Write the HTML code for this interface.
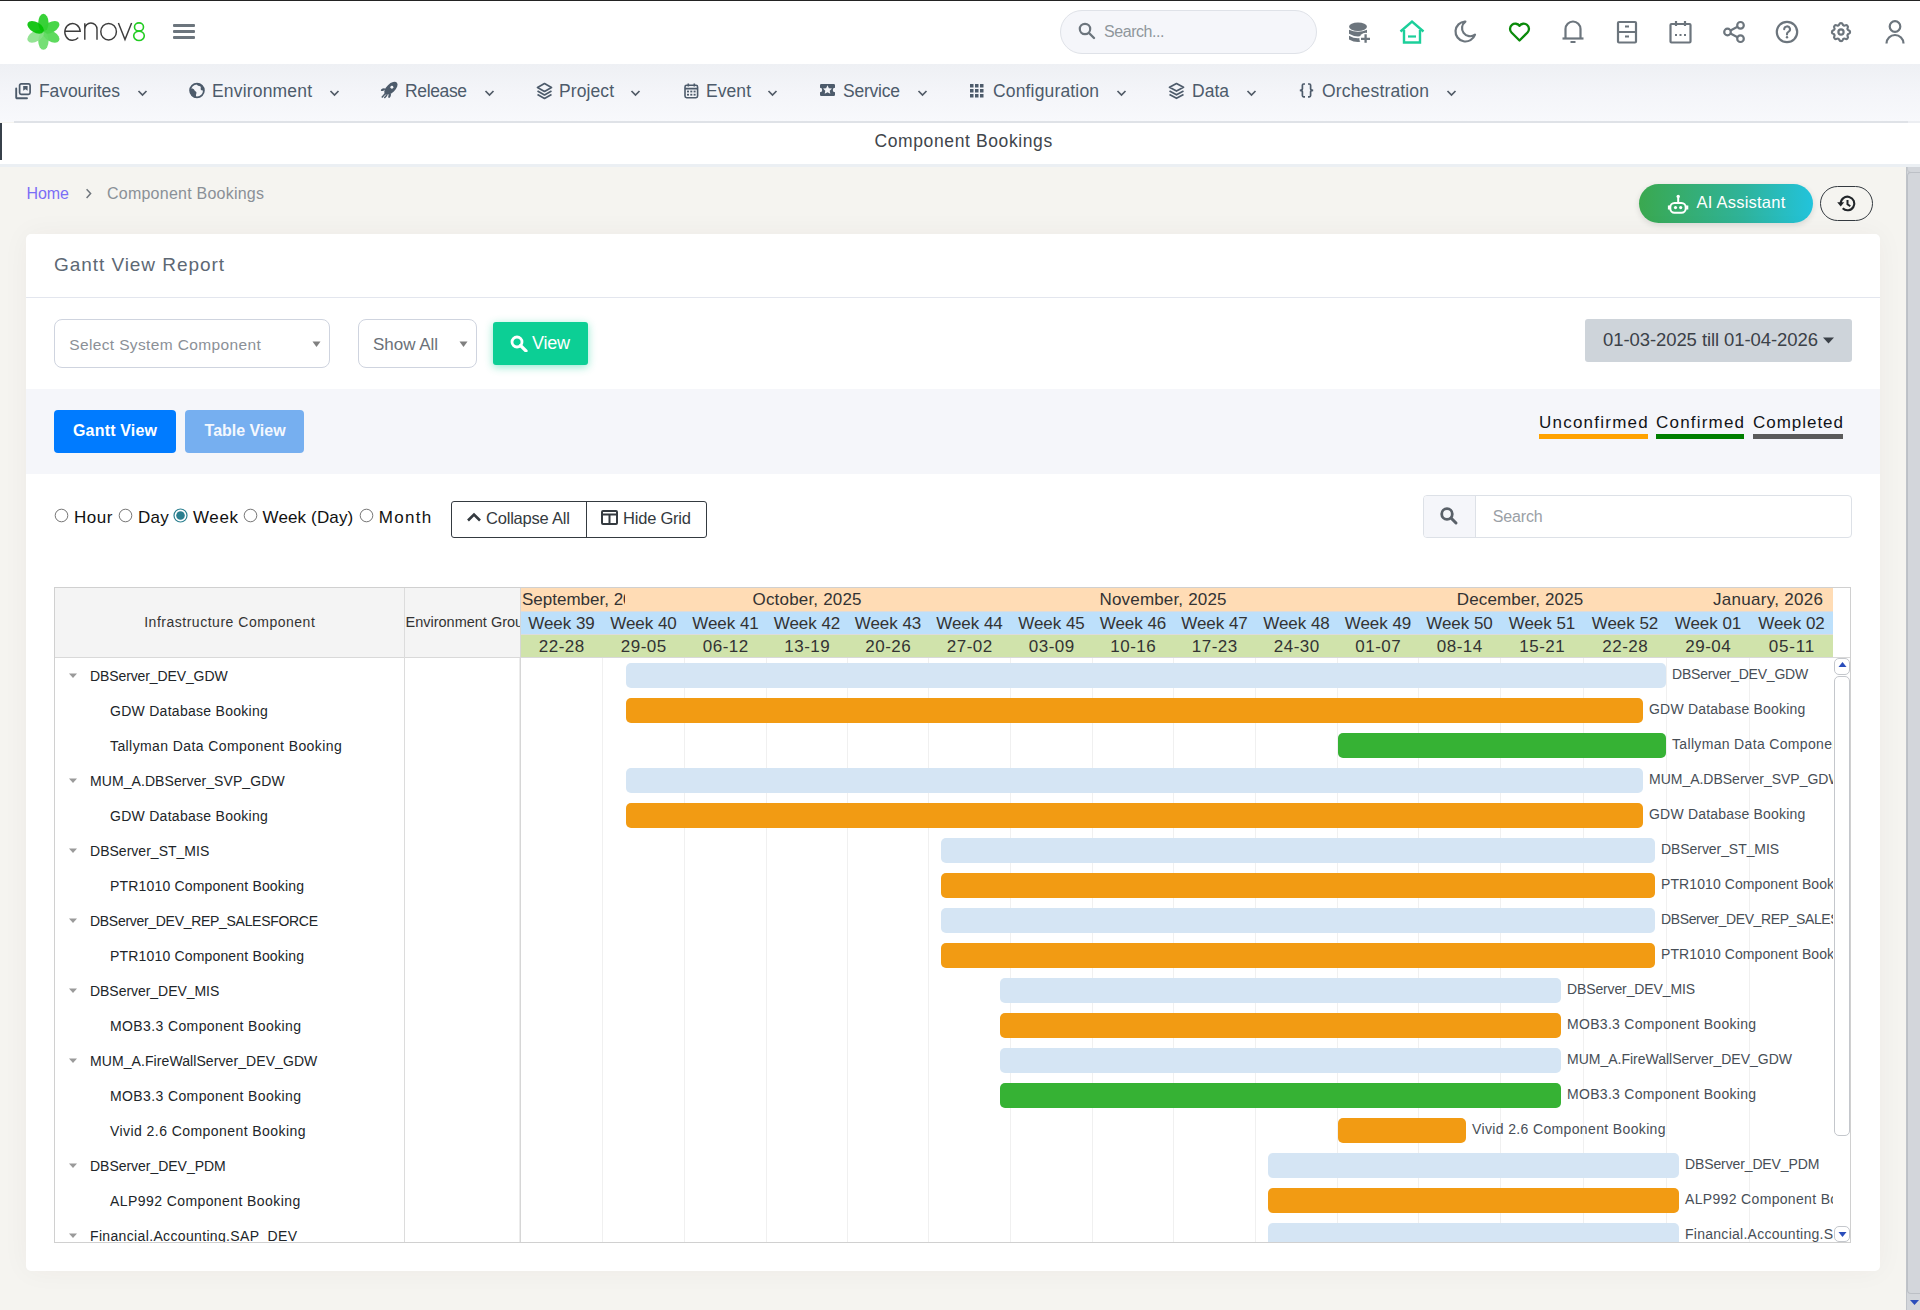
<!DOCTYPE html><html><head><meta charset="utf-8"><style>
html,body{margin:0;padding:0;}
body{width:1920px;height:1310px;position:relative;overflow:hidden;background:#f5f4f0;font-family:"Liberation Sans",sans-serif;}
.a{position:absolute;box-sizing:border-box;}
.t{position:absolute;white-space:nowrap;line-height:1;}
</style></head><body>

<div class="a" style="left:0px;top:0px;width:1920px;height:64px;background:#fff;"></div>
<div class="a" style="left:0px;top:0px;width:1920px;height:1px;background:#232323;"></div>
<svg class="a" style="left:0px;top:0px;" width="64" height="64" viewBox="0 0 64 64"><ellipse cx="43.4" cy="22.8" rx="5.2" ry="9.0" fill="#22cc22" opacity="0.9" transform="rotate(0 43.4 31.8)"/><ellipse cx="43.4" cy="22.8" rx="5.2" ry="9.0" fill="#33d233" opacity="0.9" transform="rotate(60 43.4 31.8)"/><ellipse cx="43.4" cy="22.8" rx="5.2" ry="9.0" fill="#4dd64d" opacity="0.9" transform="rotate(120 43.4 31.8)"/><ellipse cx="43.4" cy="22.8" rx="5.2" ry="9.0" fill="#66dc66" opacity="0.9" transform="rotate(180 43.4 31.8)"/><ellipse cx="43.4" cy="22.8" rx="5.2" ry="9.0" fill="#88e088" opacity="0.9" transform="rotate(240 43.4 31.8)"/><ellipse cx="43.4" cy="22.8" rx="5.2" ry="9.0" fill="#00c000" opacity="0.9" transform="rotate(300 43.4 31.8)"/></svg>
<svg class="a" style="left:60px;top:18px;" width="90" height="28" viewBox="0 0 90 28"><g fill="none" stroke="#3d3d3d" stroke-width="1.45" transform="translate(-60 -18)">
<path d="M64.7 31.2H80.2A7.7 8.4 0 1 0 78.2 37.6"/>
<path d="M84.8 23.2V39.8M84.8 29.3A6.1 6.3 0 0 1 97 29.3V39.8"/>
<ellipse cx="108.6" cy="31.7" rx="7.8" ry="8.3"/>
<path d="M118.4 23L125 39.6L131.6 23"/>
</g>
<g fill="none" stroke="#22cc22" stroke-width="1.6" transform="translate(-60 -18)">
<ellipse cx="139" cy="27" rx="4.5" ry="4.1"/><ellipse cx="139" cy="35.8" rx="5.3" ry="4.7"/>
</g></svg>
<div class="a" style="left:173px;top:24px;width:22px;height:3px;background:#6c757d;border-radius:1px;"></div>
<div class="a" style="left:173px;top:30px;width:22px;height:3px;background:#6c757d;border-radius:1px;"></div>
<div class="a" style="left:173px;top:36px;width:22px;height:3px;background:#6c757d;border-radius:1px;"></div>
<div class="a" style="left:1060px;top:10px;width:257px;height:44px;background:#f5f6fa;border:1px solid #dfe2e8;border-radius:22px;"></div>
<svg class="a" style="left:1078px;top:22px;" width="18" height="18" viewBox="0 0 18 18"><circle cx="7" cy="7" r="5.2" fill="none" stroke="#6c757d" stroke-width="2.2"/><line x1="11" y1="11" x2="16" y2="16" stroke="#6c757d" stroke-width="2.4" stroke-linecap="round"/></svg>
<div class="t" style="left:1104.00px;top:24.00px;font-size:16px;color:#8f969c;letter-spacing:-0.441px;">Search...</div>
<svg class="a" style="left:1346px;top:20px;" width="26" height="26" viewBox="0 0 26 26"><defs><mask id="dbm"><rect x="0" y="0" width="26" height="26" fill="#fff"/><circle cx="19.7" cy="19" r="6.3" fill="#000"/></mask></defs><g fill="#6c757d" mask="url(#dbm)"><ellipse cx="12" cy="6.75" rx="9" ry="4.2"/><path d="M3 9.8Q12 13.8 21 9.8V13.8Q12 19.2 3 13.8Z"/><path d="M3 15.8Q12 20.8 21 15.8V19.4Q12 24.4 3 19.4Z"/></g><path d="M19.6 14.3v8.5M15 18.9h9" stroke="#6c757d" stroke-width="2.3"/></svg>
<svg class="a" style="left:1398px;top:19px;" width="28" height="28" viewBox="0 0 28 28"><path d="M2.5 12.5L14 2.5l11.5 10" fill="none" stroke="#1ccf9a" stroke-width="2.4"/><path d="M6 11v12.5h16V11" fill="none" stroke="#1ccf9a" stroke-width="2.4"/><path d="M10 17.5h8" stroke="#1ccf9a" stroke-width="2.2"/></svg>
<svg class="a" style="left:1453px;top:19px;" width="26" height="26" viewBox="0 0 26 26"><path d="M12 2.5c.13 0 .26 0 .39 0a7.5 7.5 0 0 0 9.6 13.2a10 10 0 1 1 -10 -13.2z" fill="none" stroke="#6c757d" stroke-width="2.2" stroke-linejoin="round"/></svg>
<svg class="a" style="left:1505.5px;top:19.5px;" width="27" height="26" viewBox="0 0 27 26"><path d="M21.5 12.5l-8 8l-8 -8a5.2 5.2 0 1 1 8 -6.6a5.2 5.2 0 1 1 8 6.6z" fill="none" stroke="#0a8a0a" stroke-width="2.3" stroke-linejoin="round"/></svg>
<svg class="a" style="left:1560px;top:18px;" width="26" height="26" viewBox="0 0 26 26"><path d="M5.5 20.5V11a7.5 7.5 0 0 1 15 0v9.5" fill="none" stroke="#6c757d" stroke-width="2.2"/><path d="M2.5 20.5h21" stroke="#6c757d" stroke-width="2.2"/><path d="M10.5 24h5" stroke="#6c757d" stroke-width="2"/></svg>
<svg class="a" style="left:1614px;top:19px;" width="26" height="26" viewBox="0 0 26 26"><rect x="4" y="3" width="18" height="20.5" rx="1" fill="none" stroke="#6c757d" stroke-width="2.2"/><path d="M4 13h18M11 7.5h4M11 17.5h4" stroke="#6c757d" stroke-width="2"/></svg>
<svg class="a" style="left:1667px;top:19px;" width="26" height="26" viewBox="0 0 26 26"><rect x="3.5" y="5" width="20" height="18.5" rx="1" fill="none" stroke="#6c757d" stroke-width="2.2"/><path d="M9 2v5M18 2v5" stroke="#6c757d" stroke-width="2.2"/><path d="M8 16h2M12.5 16h2M17 16h2" stroke="#6c757d" stroke-width="2"/></svg>
<svg class="a" style="left:1721px;top:19px;" width="26" height="26" viewBox="0 0 26 26"><g fill="none" stroke="#6c757d" stroke-width="2.2"><circle cx="6.5" cy="13" r="3.3"/><circle cx="19.5" cy="6.3" r="3.3"/><circle cx="19.5" cy="19.7" r="3.3"/><path d="M9.5 11.4l7-3.6M9.5 14.6l7 3.6"/></g></svg>
<svg class="a" style="left:1774px;top:19px;" width="26" height="26" viewBox="0 0 26 26"><circle cx="13" cy="13" r="10.2" fill="none" stroke="#6c757d" stroke-width="2.2"/><path d="M10.2 10.3a2.9 2.9 0 1 1 4.2 2.6c-.9.5-1.4 1.1-1.4 2.1v.5" fill="none" stroke="#6c757d" stroke-width="2.1" stroke-linecap="round"/><circle cx="13" cy="18.3" r="1.2" fill="#6c757d"/></svg>
<svg class="a" style="left:1828px;top:19px;" width="26" height="26" viewBox="0 0 26 26"><g transform="translate(1 1)"><path d="M10.3 4.3c.4-1.7 2.9-1.7 3.4 0a1.7 1.7 0 0 0 2.6 1.1c1.5-.9 3.3.8 2.4 2.4a1.7 1.7 0 0 0 1.1 2.6c1.7.4 1.7 2.9 0 3.4a1.7 1.7 0 0 0-1.1 2.6c.9 1.5-.8 3.3-2.4 2.4a1.7 1.7 0 0 0-2.6 1.1c-.4 1.7-2.9 1.7-3.4 0a1.7 1.7 0 0 0-2.6-1.1c-1.5.9-3.3-.8-2.4-2.4a1.7 1.7 0 0 0-1.1-2.6c-1.7-.4-1.7-2.9 0-3.4a1.7 1.7 0 0 0 1.1-2.6c-.9-1.5.8-3.3 2.4-2.4c1 .6 2.3.1 2.6-1.1z" fill="none" stroke="#6c757d" stroke-width="2.2"/><circle cx="12" cy="12" r="2.6" fill="none" stroke="#6c757d" stroke-width="2.2"/></g></svg>
<svg class="a" style="left:1882px;top:19px;" width="26" height="26" viewBox="0 0 26 26"><circle cx="13" cy="7.5" r="5.3" fill="none" stroke="#6c757d" stroke-width="2.2"/><path d="M4.5 24.5a8.5 8.5 0 0 1 17 0" fill="none" stroke="#6c757d" stroke-width="2.2"/></svg>
<div class="a" style="left:0px;top:64px;width:1920px;height:58px;background:linear-gradient(180deg,#eef0f4 0%,#f4f5f9 50%,#f8f9fc 100%);"></div>
<div class="a" style="left:14px;top:121px;width:1894px;height:2px;background:#dfe2e7;"></div>
<div class="a" style="left:1908px;top:121px;width:12px;height:2px;background:#eceef2;"></div>
<div class="t" style="left:39.00px;top:83.00px;font-size:17.5px;color:#4d5b6b;letter-spacing:-0.078px;">Favourites</div>
<svg class="a" style="left:137px;top:89px;" width="11" height="8" viewBox="0 0 11 8"><path d="M1.5 2l4 4 4-4" fill="none" stroke="#505a66" stroke-width="1.7"/></svg>
<div class="t" style="left:212.00px;top:83.00px;font-size:17.5px;color:#4d5b6b;letter-spacing:0.176px;">Environment</div>
<svg class="a" style="left:329px;top:89px;" width="11" height="8" viewBox="0 0 11 8"><path d="M1.5 2l4 4 4-4" fill="none" stroke="#505a66" stroke-width="1.7"/></svg>
<div class="t" style="left:405.00px;top:83.00px;font-size:17.5px;color:#4d5b6b;letter-spacing:-0.368px;">Release</div>
<svg class="a" style="left:484px;top:89px;" width="11" height="8" viewBox="0 0 11 8"><path d="M1.5 2l4 4 4-4" fill="none" stroke="#505a66" stroke-width="1.7"/></svg>
<div class="t" style="left:559.00px;top:83.00px;font-size:17.5px;color:#4d5b6b;letter-spacing:0.089px;">Project</div>
<svg class="a" style="left:630px;top:89px;" width="11" height="8" viewBox="0 0 11 8"><path d="M1.5 2l4 4 4-4" fill="none" stroke="#505a66" stroke-width="1.7"/></svg>
<div class="t" style="left:706.00px;top:83.00px;font-size:17.5px;color:#4d5b6b;letter-spacing:0.063px;">Event</div>
<svg class="a" style="left:767px;top:89px;" width="11" height="8" viewBox="0 0 11 8"><path d="M1.5 2l4 4 4-4" fill="none" stroke="#505a66" stroke-width="1.7"/></svg>
<div class="t" style="left:843.00px;top:83.00px;font-size:17.5px;color:#4d5b6b;letter-spacing:-0.226px;">Service</div>
<svg class="a" style="left:917px;top:89px;" width="11" height="8" viewBox="0 0 11 8"><path d="M1.5 2l4 4 4-4" fill="none" stroke="#505a66" stroke-width="1.7"/></svg>
<div class="t" style="left:993.00px;top:83.00px;font-size:17.5px;color:#4d5b6b;letter-spacing:0.159px;">Configuration</div>
<svg class="a" style="left:1116px;top:89px;" width="11" height="8" viewBox="0 0 11 8"><path d="M1.5 2l4 4 4-4" fill="none" stroke="#505a66" stroke-width="1.7"/></svg>
<div class="t" style="left:1192.00px;top:83.00px;font-size:17.5px;color:#4d5b6b;letter-spacing:0.012px;">Data</div>
<svg class="a" style="left:1246px;top:89px;" width="11" height="8" viewBox="0 0 11 8"><path d="M1.5 2l4 4 4-4" fill="none" stroke="#505a66" stroke-width="1.7"/></svg>
<div class="t" style="left:1322.00px;top:83.00px;font-size:17.5px;color:#4d5b6b;letter-spacing:0.163px;">Orchestration</div>
<svg class="a" style="left:1446px;top:89px;" width="11" height="8" viewBox="0 0 11 8"><path d="M1.5 2l4 4 4-4" fill="none" stroke="#505a66" stroke-width="1.7"/></svg>
<svg class="a" style="left:14px;top:82px;" width="18" height="18" viewBox="0 0 18 18"><rect x="5.6" y="1.8" width="10.5" height="10.5" rx="1.6" fill="none" stroke="#4d5b6b" stroke-width="1.7"/><path d="M9.2 3.9h4.4v4.9l-2.2-1.5-2.2 1.5z" fill="#4d5b6b"/><path d="M2.2 6.5v8.9a.8.8 0 0 0 .8.8h10" fill="none" stroke="#4d5b6b" stroke-width="1.9" stroke-linecap="round"/></svg>
<svg class="a" style="left:188px;top:82px;" width="18" height="18" viewBox="0 0 18 18"><circle cx="9" cy="8.5" r="6.9" fill="none" stroke="#4d5b6b" stroke-width="1.8"/><path d="M3 6.5c1.5-.3 2.8.2 3.3 1.4.6 1.3 1.8 1.2 2.1 2.4.3 1.2-.6 2.2-.4 3.5.1.8.3 1.5.4 2.2C4.9 15.5 2.4 12.6 2.2 9.3z" fill="#4d5b6b"/><path d="M8.5 1.8c.3 1.2 1.3 2 2.6 2.2 1.5.2 2 1.2 1.6 2.4-.3 1 .5 1.9 1.6 2.1.7.1 1.2-.2 1.6-.6-.1-3-2.3-5.6-5.3-6.2z" fill="#4d5b6b"/></svg>
<svg class="a" style="left:370px;top:78px;" width="40" height="26" viewBox="0 0 40 26"><ellipse cx="20.9" cy="10.3" rx="8.2" ry="4.3" fill="#4d5b6b" transform="rotate(-43 20.9 10.3)"/><circle cx="21.9" cy="9.2" r="1.45" fill="#f5f6f9"/><ellipse cx="13" cy="11.6" rx="2.3" ry="1.15" fill="#4d5b6b" transform="rotate(-22 13 11.6)"/><ellipse cx="19.6" cy="17.8" rx="2.3" ry="1.15" fill="#4d5b6b" transform="rotate(-68 19.6 17.8)"/><path d="M11.8 19.6L15.6 15.3M14.3 19.9L17 16.9" stroke="#4d5b6b" stroke-width="1.5"/></svg>
<svg class="a" style="left:536px;top:82px;" width="17" height="18" viewBox="0 0 17 18"><g fill="none" stroke="#4d5b6b" stroke-width="1.7" stroke-linejoin="round"><path d="M8.5 1.5l7 4-7 4-7-4z"/><path d="M1.5 9l7 4 7-4"/><path d="M1.5 12.5l7 4 7-4"/></g></svg>
<svg class="a" style="left:683.5px;top:82.5px;" width="15" height="16" viewBox="0 0 15 16"><rect x="1" y="2.3" width="12.6" height="12.4" rx="1.6" fill="none" stroke="#4d5b6b" stroke-width="1.6"/><path d="M1 5.6h12.6M4.3 0.6v3M10.3 0.6v3" stroke="#4d5b6b" stroke-width="1.6"/><g fill="#4d5b6b"><rect x="3" y="7.6" width="2" height="1.8"/><rect x="6.3" y="7.6" width="2" height="1.8"/><rect x="9.6" y="7.6" width="2" height="1.8"/><rect x="3" y="10.8" width="2" height="1.8"/><rect x="6.3" y="10.8" width="2" height="1.8"/><rect x="9.6" y="10.8" width="2" height="1.8"/></g></svg>
<svg class="a" style="left:820px;top:84px;" width="15" height="12" viewBox="0 0 15 12"><path d="M1.2 0h12.6a1.2 1.2 0 0 1 1.2 1.2v2.6a2.2 2.2 0 0 0 0 4.4v2.6a1.2 1.2 0 0 1-1.2 1.2H1.2A1.2 1.2 0 0 1 0 10.8V8.2a2.2 2.2 0 0 0 0-4.4V1.2A1.2 1.2 0 0 1 1.2 0z" fill="#4d5b6b"/><path d="M7.5 2.4l1.05 2.2 2.4.3-1.75 1.6.45 2.4-2.15-1.2-2.15 1.2.45-2.4-1.75-1.6 2.4-.3z" fill="#f5f6f9" transform="translate(7.5 6) scale(1.3) translate(-7.5 -6)"/></svg>
<svg class="a" style="left:970px;top:84px;" width="14" height="14" viewBox="0 0 14 14"><g fill="#4d5b6b"><rect x="0" y="0" width="3.5" height="3.5"/><rect x="5" y="0" width="3.5" height="3.5"/><rect x="10" y="0" width="3.5" height="3.5"/><rect x="0" y="5" width="3.5" height="3.5"/><rect x="5" y="5" width="3.5" height="3.5"/><rect x="10" y="5" width="3.5" height="3.5"/><rect x="0" y="10" width="3.5" height="3.5"/><rect x="5" y="10" width="3.5" height="3.5"/><rect x="10" y="10" width="3.5" height="3.5"/></g></svg>
<svg class="a" style="left:1168px;top:82px;" width="17" height="18" viewBox="0 0 17 18"><g fill="none" stroke="#4d5b6b" stroke-width="1.7" stroke-linejoin="round"><path d="M8.5 1.5l7 3.8-7 3.8-7-3.8z"/><path d="M1.5 9l7 3.8 7-3.8"/><path d="M1.5 12.5l7 3.8 7-3.8"/></g></svg>
<svg class="a" style="left:1290px;top:78px;" width="30" height="26" viewBox="0 0 30 26"><g fill="none" stroke="#4d5b6b" stroke-width="1.7"><path d="M15 6H13.6Q12.4 6 12.4 7.3V10.8Q12.4 12.3 9.8 12.3Q12.4 12.3 12.4 13.8V17.5Q12.4 18.8 13.6 18.8H15"/><path d="M18 6H19.4Q20.6 6 20.6 7.3V10.8Q20.6 12.3 23.2 12.3Q20.6 12.3 20.6 13.8V17.5Q20.6 18.8 19.4 18.8H18"/></g></svg>
<div class="a" style="left:0px;top:123px;width:1920px;height:41px;background:#fff;"></div>
<div class="a" style="left:0px;top:123px;width:2px;height:37px;background:#37404a;"></div>
<div class="a" style="left:0px;top:164px;width:1920px;height:3px;background:#ebeff3;"></div>
<div class="t" style="left:874.50px;top:133.00px;font-size:17.5px;color:#40454b;letter-spacing:0.610px;">Component Bookings</div>
<div class="a" style="left:1906px;top:167px;width:14px;height:1143px;background:#d3d6db;border-left:1px solid #bfc3c9;"></div>
<div class="a" style="left:1907px;top:167px;width:13px;height:6px;background:#d3d6db;border-bottom:1px solid #bcc0c6;border-left:1px solid #c4c8cd;border-radius:0 0 0 4px;"></div>
<div class="a" style="left:1907px;top:172px;width:13px;height:1122px;background:#d3d6db;border:1px solid #bcc0c6;border-right:none;border-radius:4px 0 0 4px;"></div>
<svg class="a" style="left:1908px;top:1296px;" width="12" height="10" viewBox="0 0 12 10"><path d="M2 4h9l-4.5 5z" fill="#2a4dbb"/></svg>
<div class="t" style="left:26.50px;top:186.00px;font-size:16px;color:#7b6ef6;letter-spacing:-0.060px;">Home</div>
<svg class="a" style="left:84px;top:186px;" width="10" height="14" viewBox="0 0 10 14"><path d="M2.6 3.3l4 4.3-4 4.3" fill="none" stroke="#6f757c" stroke-width="1.5"/></svg>
<div class="t" style="left:107.00px;top:186.00px;font-size:16px;color:#8a9097;letter-spacing:0.236px;">Component Bookings</div>
<div class="a" style="left:1639px;top:184px;width:174px;height:39px;background:linear-gradient(90deg,#3aa84f 0%,#2fb39a 60%,#22c3dc 100%);border-radius:20px;box-shadow:0 2px 6px rgba(0,0,0,0.12);"></div>
<svg class="a" style="left:1666px;top:193px;" width="24" height="22" viewBox="0 0 24 22"><g fill="none" stroke="#fff" stroke-width="2"><rect x="4.3" y="10" width="15.4" height="9.8" rx="4.2"/><path d="M12.2 4.5V10"/><path d="M3 12.5v4M21.2 12.5v4" stroke-width="2.2"/></g><circle cx="12.2" cy="3.5" r="1.7" fill="#fff"/><circle cx="9.5" cy="14.6" r="1.6" fill="#fff"/><circle cx="14.7" cy="14.6" r="1.6" fill="#fff"/></svg>
<div class="t" style="left:1696.40px;top:194.00px;font-size:16.5px;color:#ffffff;letter-spacing:0.245px;">AI Assistant</div>
<div class="a" style="left:1820px;top:186px;width:53px;height:35px;border:1px solid #343a40;border-radius:18px;background:transparent;"></div>
<svg class="a" style="left:1836px;top:194px;" width="22" height="20" viewBox="0 0 22 20"><path d="M4.7 9.5A6.8 6.8 0 1 1 6.7 14.3" fill="none" stroke="#212529" stroke-width="2.1"/><path d="M1.2 8.3h7l-3.5 4.2z" fill="#212529"/><path d="M11.5 6v4.3l2.8 2" fill="none" stroke="#212529" stroke-width="2"/></svg>
<div class="a" style="left:26px;top:234px;width:1854px;height:1037px;background:#fff;border-radius:5px;box-shadow:0 0 28px rgba(60,50,30,0.045);"></div>
<div class="t" style="left:54.00px;top:255.00px;font-size:19px;color:#5d6874;letter-spacing:0.944px;">Gantt View Report</div>
<div class="a" style="left:26px;top:297px;width:1854px;height:1px;background:#e3e6ee;"></div>
<div class="a" style="left:54px;top:319px;width:276px;height:49px;border:1px solid #cfd4df;border-radius:8px;background:#fff;"></div>
<div class="t" style="left:69.20px;top:337.00px;font-size:15.5px;color:#8b9097;letter-spacing:0.368px;">Select System Component</div>
<svg class="a" style="left:312px;top:341px;" width="10" height="7" viewBox="0 0 10 7"><path d="M0.5 0.5h8l-4 5.5z" fill="#808080"/></svg>
<div class="a" style="left:358px;top:319px;width:119px;height:49px;border:1px solid #cfd4df;border-radius:8px;background:#fff;"></div>
<div class="t" style="left:373.00px;top:336.00px;font-size:17px;color:#6b7178;letter-spacing:-0.029px;">Show All</div>
<svg class="a" style="left:459px;top:341px;" width="10" height="7" viewBox="0 0 10 7"><path d="M0.5 0.5h8l-4 5.5z" fill="#808080"/></svg>
<div class="a" style="left:493px;top:322px;width:95px;height:43px;background:#0ccf95;border-radius:3px;box-shadow:0 2px 8px rgba(12,207,149,0.45);"></div>
<svg class="a" style="left:510px;top:335px;" width="19" height="17" viewBox="0 0 19 17"><circle cx="7" cy="7" r="5" fill="none" stroke="#fff" stroke-width="2.8"/><path d="M10.5 10.5l5.5 5.5" stroke="#fff" stroke-width="3.2" stroke-linecap="round"/></svg>
<div class="t" style="left:532.00px;top:334.00px;font-size:18px;color:#ffffff;letter-spacing:-0.230px;">View</div>
<div class="a" style="left:1585px;top:319px;width:267px;height:43px;background:#ced4da;border-radius:3px;"></div>
<div class="t" style="left:1603.00px;top:331.00px;font-size:18.5px;color:#3b4148;letter-spacing:-0.081px;">01-03-2025 till 01-04-2026</div>
<svg class="a" style="left:1822px;top:336px;" width="14" height="8" viewBox="0 0 14 8"><path d="M1 1.5h11l-5.5 6z" fill="#3b4148"/></svg>
<div class="a" style="left:26px;top:389px;width:1854px;height:85px;background:#f5f6fa;"></div>
<div class="a" style="left:54px;top:410px;width:122px;height:43px;background:#007bff;border-radius:4px;"></div>
<div class="t" style="left:73.00px;top:423.00px;font-size:16px;color:#fff;font-weight:bold;letter-spacing:0.179px;">Gantt View</div>
<div class="a" style="left:185px;top:410px;width:119px;height:43px;background:#76aff0;border-radius:4px;"></div>
<div class="t" style="left:204.60px;top:423.00px;font-size:16px;color:#f4f8fe;font-weight:bold;letter-spacing:-0.024px;">Table View</div>
<div class="t" style="left:1539.00px;top:414.00px;font-size:17px;color:#111418;letter-spacing:1.233px;">Unconfirmed</div>
<div class="a" style="left:1539px;top:434px;width:109px;height:5px;background:#ffa200;"></div>
<div class="t" style="left:1656.00px;top:414.00px;font-size:17px;color:#111418;letter-spacing:1.198px;">Confirmed</div>
<div class="a" style="left:1656px;top:434px;width:88px;height:5px;background:#007f00;"></div>
<div class="t" style="left:1753.00px;top:414.00px;font-size:17px;color:#111418;letter-spacing:0.974px;">Completed</div>
<div class="a" style="left:1753px;top:434px;width:90px;height:5px;background:#5b5b5b;"></div>
<svg class="a" style="left:53.9px;top:508px;" width="15" height="15" viewBox="0 0 15 15"><circle cx="7.5" cy="7.5" r="6.3" fill="#fff" stroke="#767676" stroke-width="1"/></svg>
<div class="t" style="left:73.90px;top:509.00px;font-size:17px;color:#111;letter-spacing:0.584px;">Hour</div>
<svg class="a" style="left:117.5px;top:508px;" width="15" height="15" viewBox="0 0 15 15"><circle cx="7.5" cy="7.5" r="6.3" fill="#fff" stroke="#767676" stroke-width="1"/></svg>
<div class="t" style="left:138.00px;top:509.00px;font-size:17px;color:#111;letter-spacing:0.234px;">Day</div>
<svg class="a" style="left:172.7px;top:508px;" width="15" height="15" viewBox="0 0 15 15"><circle cx="7.5" cy="7.5" r="6.5" fill="#fff" stroke="#2b7f8f" stroke-width="1.2"/><circle cx="7.5" cy="7.5" r="4.3" fill="#2b7f8f"/></svg>
<div class="t" style="left:193.00px;top:509.00px;font-size:17px;color:#111;letter-spacing:0.617px;">Week</div>
<svg class="a" style="left:242.5px;top:508px;" width="15" height="15" viewBox="0 0 15 15"><circle cx="7.5" cy="7.5" r="6.3" fill="#fff" stroke="#767676" stroke-width="1"/></svg>
<div class="t" style="left:262.50px;top:509.00px;font-size:17px;color:#111;letter-spacing:0.142px;">Week (Day)</div>
<svg class="a" style="left:358.7px;top:508px;" width="15" height="15" viewBox="0 0 15 15"><circle cx="7.5" cy="7.5" r="6.3" fill="#fff" stroke="#767676" stroke-width="1"/></svg>
<div class="t" style="left:378.70px;top:509.00px;font-size:17px;color:#111;letter-spacing:1.313px;">Month</div>
<div class="a" style="left:451px;top:501px;width:256px;height:37px;border:1px solid #343a40;border-radius:3px;"></div>
<div class="a" style="left:586px;top:501px;width:1px;height:37px;background:#343a40;"></div>
<svg class="a" style="left:466px;top:511px;" width="16" height="12" viewBox="0 0 16 12"><path d="M2 9.5l6-6 6 6" fill="none" stroke="#343a40" stroke-width="2.6"/></svg>
<div class="t" style="left:486.00px;top:510.00px;font-size:16.5px;color:#343a40;letter-spacing:-0.201px;">Collapse All</div>
<svg class="a" style="left:601px;top:510px;" width="17" height="15" viewBox="0 0 17 15"><rect x="1" y="1" width="15" height="13" rx="1" fill="none" stroke="#343a40" stroke-width="2"/><path d="M1 4.5h15M8.5 4.5v9.5" stroke="#343a40" stroke-width="2"/></svg>
<div class="t" style="left:623.00px;top:510.00px;font-size:16.5px;color:#343a40;letter-spacing:-0.211px;">Hide Grid</div>
<div class="a" style="left:1423px;top:495px;width:429px;height:43px;border:1px solid #dde1e7;border-radius:4px;background:#fff;"></div>
<div class="a" style="left:1424px;top:496px;width:52px;height:41px;background:#f5f6fa;border-right:1px solid #dde1e7;border-radius:3px 0 0 3px;"></div>
<svg class="a" style="left:1439px;top:506px;" width="20" height="20" viewBox="0 0 20 20"><circle cx="8" cy="8" r="5.3" fill="none" stroke="#5a6169" stroke-width="2.8"/><path d="M12 12l5 5" stroke="#5a6169" stroke-width="3" stroke-linecap="round"/></svg>
<div class="t" style="left:1492.70px;top:509.00px;font-size:16px;color:#9aa0a6;letter-spacing:-0.139px;">Search</div>
<div class="a" style="left:54px;top:587px;width:1797px;height:656px;border:1px solid #d0d0d0;background:#fff;"></div>
<div class="a" style="left:55px;top:588px;width:465px;height:69px;background:#f4f4f4;"></div>
<div class="a" style="left:55px;top:657px;width:1795px;height:1px;background:#d9d9d9;"></div>
<div class="a" style="left:404px;top:588px;width:1px;height:654px;background:#dcdcdc;"></div>
<div class="a" style="left:519px;top:658px;width:1px;height:584px;background:#ececec;"></div>
<div class="a" style="left:520px;top:588px;width:1px;height:654px;background:#d6d6d6;"></div>
<div class="t" style="left:144.20px;top:615.00px;font-size:14px;color:#333;letter-spacing:0.515px;">Infrastructure Component</div>
<div class="a" style="left:405px;top:600px;width:115px;height:40px;overflow:hidden;">
<div class="t" style="left:0.50px;top:15.00px;font-size:14.5px;color:#333;">Environment Group</div>
</div>
<div class="a" style="left:521px;top:588px;width:1312px;height:23px;background:#ffdcb5;"></div>
<div class="a" style="left:521px;top:611px;width:1312px;height:23px;background:#bde0fb;"></div>
<div class="a" style="left:521px;top:634px;width:1312px;height:23px;background:#d0e3ab;"></div>
<div class="a" style="left:521px;top:611px;width:1312px;height:1px;background:#dcdcdc;"></div>
<div class="a" style="left:521px;top:634px;width:1312px;height:1px;background:#dcdcdc;"></div>
<div class="t" style="left:528.20px;top:615.00px;font-size:17px;color:#333;letter-spacing:-0.030px;">Week 39</div>
<div class="t" style="left:538.85px;top:638.00px;font-size:17px;color:#333;letter-spacing:0.455px;">22-28</div>
<div class="t" style="left:610.20px;top:615.00px;font-size:17px;color:#333;letter-spacing:-0.030px;">Week 40</div>
<div class="t" style="left:620.85px;top:638.00px;font-size:17px;color:#333;letter-spacing:0.455px;">29-05</div>
<div class="t" style="left:692.20px;top:615.00px;font-size:17px;color:#333;letter-spacing:-0.030px;">Week 41</div>
<div class="t" style="left:702.85px;top:638.00px;font-size:17px;color:#333;letter-spacing:0.455px;">06-12</div>
<div class="t" style="left:773.70px;top:615.00px;font-size:17px;color:#333;letter-spacing:-0.030px;">Week 42</div>
<div class="t" style="left:784.35px;top:638.00px;font-size:17px;color:#333;letter-spacing:0.455px;">13-19</div>
<div class="t" style="left:854.70px;top:615.00px;font-size:17px;color:#333;letter-spacing:-0.030px;">Week 43</div>
<div class="t" style="left:865.35px;top:638.00px;font-size:17px;color:#333;letter-spacing:0.455px;">20-26</div>
<div class="t" style="left:936.20px;top:615.00px;font-size:17px;color:#333;letter-spacing:-0.030px;">Week 44</div>
<div class="t" style="left:946.85px;top:638.00px;font-size:17px;color:#333;letter-spacing:0.455px;">27-02</div>
<div class="t" style="left:1018.20px;top:615.00px;font-size:17px;color:#333;letter-spacing:-0.030px;">Week 45</div>
<div class="t" style="left:1028.85px;top:638.00px;font-size:17px;color:#333;letter-spacing:0.455px;">03-09</div>
<div class="t" style="left:1099.70px;top:615.00px;font-size:17px;color:#333;letter-spacing:-0.030px;">Week 46</div>
<div class="t" style="left:1110.35px;top:638.00px;font-size:17px;color:#333;letter-spacing:0.455px;">10-16</div>
<div class="t" style="left:1181.20px;top:615.00px;font-size:17px;color:#333;letter-spacing:-0.030px;">Week 47</div>
<div class="t" style="left:1191.85px;top:638.00px;font-size:17px;color:#333;letter-spacing:0.455px;">17-23</div>
<div class="t" style="left:1263.20px;top:615.00px;font-size:17px;color:#333;letter-spacing:-0.030px;">Week 48</div>
<div class="t" style="left:1273.85px;top:638.00px;font-size:17px;color:#333;letter-spacing:0.455px;">24-30</div>
<div class="t" style="left:1344.70px;top:615.00px;font-size:17px;color:#333;letter-spacing:-0.030px;">Week 49</div>
<div class="t" style="left:1355.35px;top:638.00px;font-size:17px;color:#333;letter-spacing:0.455px;">01-07</div>
<div class="t" style="left:1426.20px;top:615.00px;font-size:17px;color:#333;letter-spacing:-0.030px;">Week 50</div>
<div class="t" style="left:1436.85px;top:638.00px;font-size:17px;color:#333;letter-spacing:0.455px;">08-14</div>
<div class="t" style="left:1508.70px;top:615.00px;font-size:17px;color:#333;letter-spacing:-0.030px;">Week 51</div>
<div class="t" style="left:1519.35px;top:638.00px;font-size:17px;color:#333;letter-spacing:0.455px;">15-21</div>
<div class="t" style="left:1591.70px;top:615.00px;font-size:17px;color:#333;letter-spacing:-0.030px;">Week 52</div>
<div class="t" style="left:1602.35px;top:638.00px;font-size:17px;color:#333;letter-spacing:0.455px;">22-28</div>
<div class="t" style="left:1674.70px;top:615.00px;font-size:17px;color:#333;letter-spacing:-0.030px;">Week 01</div>
<div class="t" style="left:1685.35px;top:638.00px;font-size:17px;color:#333;letter-spacing:0.455px;">29-04</div>
<div class="t" style="left:1758.20px;top:615.00px;font-size:17px;color:#333;letter-spacing:-0.030px;">Week 02</div>
<div class="t" style="left:1768.85px;top:638.00px;font-size:17px;color:#333;letter-spacing:0.770px;">05-11</div>
<div class="a" style="left:521px;top:588px;width:104px;height:23px;overflow:hidden;">
<div class="t" style="left:1.00px;top:3.00px;font-size:17px;color:#333;">September, 2025</div>
</div>
<div class="t" style="left:752.50px;top:591.00px;font-size:17px;color:#333;letter-spacing:0.183px;">October, 2025</div>
<div class="t" style="left:1099.50px;top:591.00px;font-size:17px;color:#333;letter-spacing:0.173px;">November, 2025</div>
<div class="t" style="left:1456.75px;top:591.00px;font-size:17px;color:#333;letter-spacing:0.135px;">December, 2025</div>
<div class="t" style="left:1713.00px;top:591.00px;font-size:17px;color:#333;letter-spacing:0.293px;">January, 2026</div>
<div class="a" style="left:602px;top:658px;width:1px;height:584px;background:#f0f0f0;"></div>
<div class="a" style="left:684px;top:658px;width:1px;height:584px;background:#f0f0f0;"></div>
<div class="a" style="left:766px;top:658px;width:1px;height:584px;background:#f0f0f0;"></div>
<div class="a" style="left:847px;top:658px;width:1px;height:584px;background:#f0f0f0;"></div>
<div class="a" style="left:928px;top:658px;width:1px;height:584px;background:#f0f0f0;"></div>
<div class="a" style="left:1010px;top:658px;width:1px;height:584px;background:#f0f0f0;"></div>
<div class="a" style="left:1092px;top:658px;width:1px;height:584px;background:#f0f0f0;"></div>
<div class="a" style="left:1173px;top:658px;width:1px;height:584px;background:#f0f0f0;"></div>
<div class="a" style="left:1255px;top:658px;width:1px;height:584px;background:#f0f0f0;"></div>
<div class="a" style="left:1337px;top:658px;width:1px;height:584px;background:#f0f0f0;"></div>
<div class="a" style="left:1418px;top:658px;width:1px;height:584px;background:#f0f0f0;"></div>
<div class="a" style="left:1500px;top:658px;width:1px;height:584px;background:#f0f0f0;"></div>
<div class="a" style="left:1583px;top:658px;width:1px;height:584px;background:#f0f0f0;"></div>
<div class="a" style="left:1666px;top:658px;width:1px;height:584px;background:#f0f0f0;"></div>
<div class="a" style="left:1749px;top:658px;width:1px;height:584px;background:#f0f0f0;"></div>
<div class="a" style="left:55px;top:658px;width:1778px;height:584px;overflow:hidden;">
<svg class="a" style="left:13.799999999999997px;top:15px;" width="9" height="6" viewBox="0 0 9 6"><path d="M0 0.5h8l-4 4.5z" fill="#9a9a9a"/></svg>
<div class="t" style="left:35.00px;top:11.00px;font-size:14px;color:#212529;letter-spacing:-0.110px;">DBServer_DEV_GDW</div>
<div class="a" style="left:571px;top:5px;width:1040px;height:25px;background:#d5e5f4;border-radius:5px;"></div>
<div class="t" style="left:1617.00px;top:9.00px;font-size:14px;color:#474e56;letter-spacing:-0.202px;">DBServer_DEV_GDW</div>
<div class="t" style="left:55.00px;top:46.00px;font-size:14px;color:#212529;letter-spacing:0.278px;">GDW Database Booking</div>
<div class="a" style="left:571px;top:40px;width:1017px;height:25px;background:#f29b13;border-radius:5px;"></div>
<div class="t" style="left:1594.00px;top:44.00px;font-size:14px;color:#474e56;letter-spacing:0.195px;">GDW Database Booking</div>
<div class="t" style="left:55.00px;top:81.00px;font-size:14px;color:#212529;letter-spacing:0.408px;">Tallyman Data Component Booking</div>
<div class="a" style="left:1283px;top:75px;width:328px;height:25px;background:#36b234;border-radius:5px;"></div>
<div class="t" style="left:1617.00px;top:79.00px;font-size:14px;color:#474e56;letter-spacing:0.331px;">Tallyman Data Component Booking</div>
<svg class="a" style="left:13.799999999999997px;top:120px;" width="9" height="6" viewBox="0 0 9 6"><path d="M0 0.5h8l-4 4.5z" fill="#9a9a9a"/></svg>
<div class="t" style="left:35.00px;top:116.00px;font-size:14px;color:#212529;letter-spacing:0.079px;">MUM_A.DBServer_SVP_GDW</div>
<div class="a" style="left:571px;top:110px;width:1017px;height:25px;background:#d5e5f4;border-radius:5px;"></div>
<div class="t" style="left:1594.00px;top:114.00px;font-size:14px;color:#474e56;letter-spacing:-0.013px;">MUM_A.DBServer_SVP_GDW</div>
<div class="t" style="left:55.00px;top:151.00px;font-size:14px;color:#212529;letter-spacing:0.278px;">GDW Database Booking</div>
<div class="a" style="left:571px;top:145px;width:1017px;height:25px;background:#f29b13;border-radius:5px;"></div>
<div class="t" style="left:1594.00px;top:149.00px;font-size:14px;color:#474e56;letter-spacing:0.195px;">GDW Database Booking</div>
<svg class="a" style="left:13.799999999999997px;top:190px;" width="9" height="6" viewBox="0 0 9 6"><path d="M0 0.5h8l-4 4.5z" fill="#9a9a9a"/></svg>
<div class="t" style="left:35.00px;top:186.00px;font-size:14px;color:#212529;letter-spacing:0.019px;">DBServer_ST_MIS</div>
<div class="a" style="left:886px;top:180px;width:714px;height:25px;background:#d5e5f4;border-radius:5px;"></div>
<div class="t" style="left:1606.00px;top:184.00px;font-size:14px;color:#474e56;letter-spacing:-0.066px;">DBServer_ST_MIS</div>
<div class="t" style="left:55.00px;top:221.00px;font-size:14px;color:#212529;letter-spacing:0.171px;">PTR1010 Component Booking</div>
<div class="a" style="left:886px;top:215px;width:714px;height:25px;background:#f29b13;border-radius:5px;"></div>
<div class="t" style="left:1606.00px;top:219.00px;font-size:14px;color:#474e56;letter-spacing:0.090px;">PTR1010 Component Booking</div>
<svg class="a" style="left:13.799999999999997px;top:260px;" width="9" height="6" viewBox="0 0 9 6"><path d="M0 0.5h8l-4 4.5z" fill="#9a9a9a"/></svg>
<div class="t" style="left:35.00px;top:256.00px;font-size:14px;color:#212529;letter-spacing:-0.298px;">DBServer_DEV_REP_SALESFORCE</div>
<div class="a" style="left:886px;top:250px;width:714px;height:25px;background:#d5e5f4;border-radius:5px;"></div>
<div class="t" style="left:1606.00px;top:254.00px;font-size:14px;color:#474e56;letter-spacing:-0.386px;">DBServer_DEV_REP_SALESFORCE</div>
<div class="t" style="left:55.00px;top:291.00px;font-size:14px;color:#212529;letter-spacing:0.171px;">PTR1010 Component Booking</div>
<div class="a" style="left:886px;top:285px;width:714px;height:25px;background:#f29b13;border-radius:5px;"></div>
<div class="t" style="left:1606.00px;top:289.00px;font-size:14px;color:#474e56;letter-spacing:0.090px;">PTR1010 Component Booking</div>
<svg class="a" style="left:13.799999999999997px;top:330px;" width="9" height="6" viewBox="0 0 9 6"><path d="M0 0.5h8l-4 4.5z" fill="#9a9a9a"/></svg>
<div class="t" style="left:35.00px;top:326.00px;font-size:14px;color:#212529;letter-spacing:-0.042px;">DBServer_DEV_MIS</div>
<div class="a" style="left:945px;top:320px;width:561px;height:25px;background:#d5e5f4;border-radius:5px;"></div>
<div class="t" style="left:1512.00px;top:324.00px;font-size:14px;color:#474e56;letter-spacing:-0.128px;">DBServer_DEV_MIS</div>
<div class="t" style="left:55.00px;top:361.00px;font-size:14px;color:#212529;letter-spacing:0.387px;">MOB3.3 Component Booking</div>
<div class="a" style="left:945px;top:355px;width:561px;height:25px;background:#f29b13;border-radius:5px;"></div>
<div class="t" style="left:1512.00px;top:359.00px;font-size:14px;color:#474e56;letter-spacing:0.304px;">MOB3.3 Component Booking</div>
<svg class="a" style="left:13.799999999999997px;top:400px;" width="9" height="6" viewBox="0 0 9 6"><path d="M0 0.5h8l-4 4.5z" fill="#9a9a9a"/></svg>
<div class="t" style="left:35.00px;top:396.00px;font-size:14px;color:#212529;letter-spacing:0.083px;">MUM_A.FireWallServer_DEV_GDW</div>
<div class="a" style="left:945px;top:390px;width:561px;height:25px;background:#d5e5f4;border-radius:5px;"></div>
<div class="t" style="left:1512.00px;top:394.00px;font-size:14px;color:#474e56;letter-spacing:-0.002px;">MUM_A.FireWallServer_DEV_GDW</div>
<div class="t" style="left:55.00px;top:431.00px;font-size:14px;color:#212529;letter-spacing:0.387px;">MOB3.3 Component Booking</div>
<div class="a" style="left:945px;top:425px;width:561px;height:25px;background:#36b234;border-radius:5px;"></div>
<div class="t" style="left:1512.00px;top:429.00px;font-size:14px;color:#474e56;letter-spacing:0.304px;">MOB3.3 Component Booking</div>
<div class="t" style="left:55.00px;top:466.00px;font-size:14px;color:#212529;letter-spacing:0.435px;">Vivid 2.6 Component Booking</div>
<div class="a" style="left:1283px;top:460px;width:128px;height:25px;background:#f29b13;border-radius:5px;"></div>
<div class="t" style="left:1417.00px;top:464.00px;font-size:14px;color:#474e56;letter-spacing:0.360px;">Vivid 2.6 Component Booking</div>
<svg class="a" style="left:13.799999999999997px;top:505px;" width="9" height="6" viewBox="0 0 9 6"><path d="M0 0.5h8l-4 4.5z" fill="#9a9a9a"/></svg>
<div class="t" style="left:35.00px;top:501.00px;font-size:14px;color:#212529;letter-spacing:-0.030px;">DBServer_DEV_PDM</div>
<div class="a" style="left:1213px;top:495px;width:411px;height:25px;background:#d5e5f4;border-radius:5px;"></div>
<div class="t" style="left:1630.00px;top:499.00px;font-size:14px;color:#474e56;letter-spacing:-0.121px;">DBServer_DEV_PDM</div>
<div class="t" style="left:55.00px;top:536.00px;font-size:14px;color:#212529;letter-spacing:0.419px;">ALP992 Component Booking</div>
<div class="a" style="left:1213px;top:530px;width:411px;height:25px;background:#f29b13;border-radius:5px;"></div>
<div class="t" style="left:1630.00px;top:534.00px;font-size:14px;color:#474e56;letter-spacing:0.336px;">ALP992 Component Booking</div>
<svg class="a" style="left:13.799999999999997px;top:575px;" width="9" height="6" viewBox="0 0 9 6"><path d="M0 0.5h8l-4 4.5z" fill="#9a9a9a"/></svg>
<div class="t" style="left:35.00px;top:571.00px;font-size:14px;color:#212529;letter-spacing:0.346px;">Financial.Accounting.SAP_DEV</div>
<div class="a" style="left:1213px;top:565px;width:411px;height:25px;background:#d5e5f4;border-radius:5px;"></div>
<div class="t" style="left:1630.00px;top:569.00px;font-size:14px;color:#474e56;letter-spacing:0.269px;">Financial.Accounting.SAP_DEV</div>
</div>
<div class="a" style="left:1833px;top:658px;width:17px;height:584px;background:#fff;"></div>
<div class="a" style="left:1834px;top:658px;width:16px;height:17px;border:1px solid #c4c7cc;border-radius:5px;background:#fff;"></div>
<svg class="a" style="left:1838px;top:661px;" width="9" height="7" viewBox="0 0 9 7"><path d="M0.5 6h8l-4-5z" fill="#2a4dbb"/></svg>
<div class="a" style="left:1834px;top:676px;width:16px;height:460px;border:1px solid #c4c7cc;border-radius:5px;background:#fff;"></div>
<div class="a" style="left:1834px;top:1226px;width:16px;height:16px;border:1px solid #c4c7cc;border-radius:5px;background:#fff;"></div>
<svg class="a" style="left:1838px;top:1231px;" width="9" height="7" viewBox="0 0 9 7"><path d="M0.5 1h8l-4 5z" fill="#2a4dbb"/></svg>
</body></html>
